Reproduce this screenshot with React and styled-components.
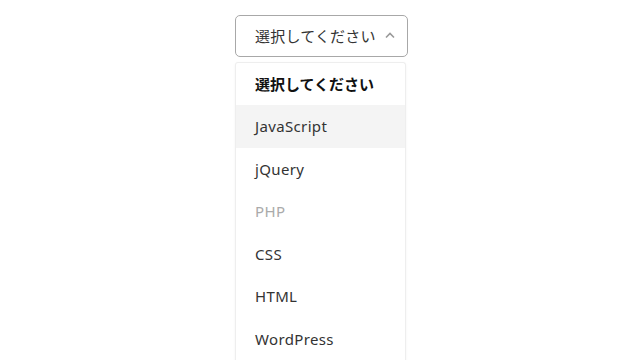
import React from "react";
import styled, { createGlobalStyle } from "styled-components";

const Global = createGlobalStyle`
  html, body { margin: 0; padding: 0; background: #fff; }
  body { font-family: "Noto Sans", "Noto Sans CJK JP", sans-serif; }
`;

const Page = styled.div`
  width: 640px;
  height: 360px;
  overflow: hidden;
  display: flex;
  justify-content: center;
  padding-left: 3px;
  box-sizing: border-box;
  padding-top: 15px;
`;

const Wrap = styled.div`
  width: 173px;
  display: flex;
  flex-direction: column;
  gap: 5px;
`;

const Trigger = styled.div`
  height: 45px;
  box-sizing: border-box;
  border: 1px solid #a8a8a8;
  border-radius: 5px;
  display: flex;
  align-items: center;
  justify-content: space-between;
  padding: 0 12px 0 19px;
  font-size: 15px;
  color: #333;
`;

const Label = styled.span`
  letter-spacing: 0.2px;
`;

const Menu = styled.ul`
  list-style: none;
  margin: 0;
  padding: 0;
  width: 171px;
  border: 1px solid #eeeeee;
  border-bottom: none;
  box-shadow: 0 1px 3px rgba(0, 0, 0, 0.05);
  border-radius: 3px 3px 0 0;
  box-sizing: border-box;
`;

const Item = styled.li`
  height: 42.5px;
  display: flex;
  align-items: center;
  padding-left: 19px;
  font-size: 15px;
  letter-spacing: ${(p) => (p.$bold ? "0" : "0.35px")};
  color: ${(p) => (p.$disabled ? "#aaaaaa" : p.$bold ? "#111" : "#333")};
  font-weight: ${(p) => (p.$bold ? 700 : 400)};
  background: ${(p) => (p.$active ? "#f4f4f4" : "transparent")};
`;

const items = [
  { t: "選択してください", bold: true },
  { t: "JavaScript", active: true },
  { t: "jQuery" },
  { t: "PHP", disabled: true },
  { t: "CSS" },
  { t: "HTML" },
  { t: "WordPress" },
];

export default function App() {
  return (
    <>
      <Global />
      <Page>
        <Wrap>
          <Trigger>
            <Label>選択してください</Label>
            <svg width="10" height="7" viewBox="0 0 10 7" fill="none">
              <path d="M1 5.5 L5 1.5 L9 5.5" stroke="#999" strokeWidth="1.6" />
            </svg>
          </Trigger>
          <Menu>
            {items.map((it) => (
              <Item key={it.t} $bold={it.bold} $active={it.active} $disabled={it.disabled}>
                {it.t}
              </Item>
            ))}
          </Menu>
        </Wrap>
      </Page>
    </>
  );
}
